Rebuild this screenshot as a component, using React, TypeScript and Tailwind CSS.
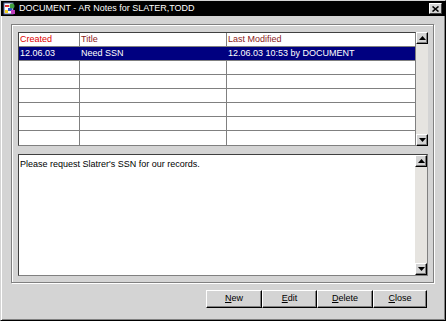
import React from "react";

const font = { fontFamily: '"Liberation Sans", Arial, sans-serif' };

function Arrow({ up }: { up?: boolean }) {
  return (
    <svg width="7" height="4" viewBox="0 0 7 4">
      <path d={up ? "M0 4 L3.5 0 L7 4Z" : "M0 0 L7 0 L3.5 4Z"} fill="#000" />
    </svg>
  );
}

function ScrollBtn({ up }: { up?: boolean }) {
  return (
    <div className="w-[12px] h-[12px] bg-[#d4d4d4] border border-t-white border-l-white border-r-black border-b-black shadow-[inset_-1px_-1px_0_#808080] flex items-center justify-center">
      <Arrow up={up} />
    </div>
  );
}

function ScrollBar() {
  return (
    <div className="w-[12px] flex flex-col bg-[#e6e4e0]">
      <ScrollBtn up />
      <div className="flex-1" />
      <ScrollBtn />
    </div>
  );
}

const rows = [
  { c: "12.06.03", t: "Need SSN", m: "12.06.03 10:53 by DOCUMENT", sel: true },
  { c: "", t: "", m: "" },
  { c: "", t: "", m: "" },
  { c: "", t: "", m: "" },
  { c: "", t: "", m: "" },
  { c: "", t: "", m: "" },
  { c: "", t: "", m: "" },
];

function Btn({ u, rest, w }: { u: string; rest: string; w: string }) {
  return (
    <div
      className={`${w} h-[18px] bg-[#d4d4d4] border border-t-white border-l-white border-r-black border-b-black shadow-[inset_-1px_-1px_0_#808080] flex items-center justify-center text-[9px] text-black`}
    >
      <span>
        <span className="underline">{u}</span>
        {rest}
      </span>
    </div>
  );
}

export default function App() {
  return (
    <div style={font} className="w-[446px] h-[321px] bg-[#d4d4d4] border border-t-[#d4d4d4] border-l-[#d4d4d4] border-r-black border-b-black shadow-[inset_1px_1px_0_#fff,inset_-1px_-1px_0_#808080] flex flex-col overflow-hidden">
      {/* Title bar */}
      <div className="h-[15px] bg-black flex items-center shrink-0">
        <div className="w-[13px] h-[13px] ml-[2px] mr-[3px] flex items-center justify-center">
          <svg width="13" height="13" viewBox="0 0 13 13">
            <rect x="1" y="1" width="9" height="11" fill="#fff" stroke="#5060a0" strokeWidth="1" />
            <rect x="2" y="3" width="4" height="2" fill="#e03030" />
            <rect x="5" y="6" width="4" height="3" fill="#3050d0" />
            <rect x="2" y="8" width="3" height="3" fill="#f0d020" />
            <circle cx="9" cy="4" r="2.5" fill="#40a040" />
            <rect x="8" y="8" width="4" height="4" fill="#c040c0" />
          </svg>
        </div>
        <span className="text-white text-[9px] leading-none">DOCUMENT - AR Notes for SLATER,TODD</span>
        <div className="flex-1" />
        <div className="w-[13px] h-[11px] mr-[3px] bg-[#d4d4d4] border border-t-white border-l-white border-r-[#404040] border-b-[#404040] flex items-center justify-center">
          <svg width="7" height="6" viewBox="0 0 7 6">
            <path d="M0.5 0.5 L6.5 5.5 M6.5 0.5 L0.5 5.5" stroke="#000" strokeWidth="1.6" />
          </svg>
        </div>
      </div>

      {/* Body */}
      <div className="flex flex-col pl-[10px] pr-[11px] pt-[8px]">
        {/* Frame */}
        <div className="h-[259px] border border-[#808080] shadow-[inset_1px_1px_0_#fff,1px_1px_0_#fff] pt-[7px] pl-[6px] pr-[5px] flex flex-col">
          {/* Table */}
          <div className="h-[114px] flex">
            <div className="flex-1 bg-white border border-t-[#404040] border-l-[#404040] border-r-[#808080] border-b-[#808080] text-[9px]">
              <div className="grid grid-cols-[61px_147px_1fr]">
                <div className="h-[14px] border-r border-b border-[#808080] pl-[1px] flex items-center text-[#e00000]">Created</div>
                <div className="h-[14px] border-r border-b border-[#808080] pl-[1px] flex items-center text-[#8c1c1c]">Title</div>
                <div className="h-[14px] border-b border-[#808080] pl-[1px] flex items-center text-[#8c1c1c]">Last Modified</div>
                {rows.map((r, i) =>
                  r.sel ? (
                    <React.Fragment key={i}>
                      <div className="h-[14px] bg-[#000080] text-white border-b border-[#808080] pl-[1px] flex items-center">{r.c}</div>
                      <div className="h-[14px] bg-[#000080] text-white border-b border-[#808080] pl-[1px] flex items-center">{r.t}</div>
                      <div className="h-[14px] bg-[#000080] text-white border-b border-[#808080] pl-[1px] flex items-center">{r.m}</div>
                    </React.Fragment>
                  ) : (
                    <React.Fragment key={i}>
                      <div className={`h-[14px] border-r border-[#808080] ${i < rows.length - 1 ? "border-b" : ""}`} />
                      <div className={`h-[14px] border-r border-[#808080] ${i < rows.length - 1 ? "border-b" : ""}`} />
                      <div className={`h-[14px] border-[#808080] ${i < rows.length - 1 ? "border-b" : ""}`} />
                    </React.Fragment>
                  )
                )}
              </div>
            </div>
            <ScrollBar />
          </div>

          {/* Notes */}
          <div className="h-[122px] mt-[8px] flex bg-white border border-t-[#404040] border-l-[#404040] border-r-[#808080] border-b-[#808080]">
            <div className="flex-1 pl-[1px] pt-[4px] text-[9px] text-black leading-[11px]">
              Please request Slatrer's SSN for our records.
            </div>
            <ScrollBar />
          </div>
        </div>

        {/* Buttons */}
        <div className="flex justify-end mt-[7px] pr-[7px]">
          <Btn u="N" rest="ew" w="w-[56px]" />
          <Btn u="E" rest="dit" w="w-[55px]" />
          <Btn u="D" rest="elete" w="w-[56px]" />
          <Btn u="C" rest="lose" w="w-[54px]" />
        </div>
      </div>
    </div>
  );
}
